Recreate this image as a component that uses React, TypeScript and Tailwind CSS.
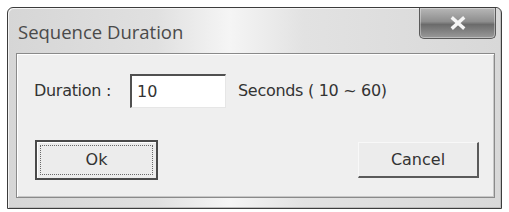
export default function App() {
  return (
    <div className="h-[212px] w-[509px] bg-white pl-[7px] pt-[7px]" style={{ fontFamily: "Tahoma, 'DejaVu Sans', sans-serif" }}>
      <div className="relative flex h-[202px] w-[495px] flex-col rounded-t-[6px] border border-[#3c3c3c] bg-[linear-gradient(90deg,#d6d6d6_0%,#e0e0e0_30%,#f5f5f5_45%,#e2e2e2_60%,#d8d8d8_100%)] shadow-[inset_1px_1px_0_#f4f4f4,inset_-1px_-1px_0_#bdbdbd]">
        <div className="flex h-[45px] items-start">
          <span className="pl-[10px] pt-[13px] font-['Open_Sans',sans-serif] text-[18.5px] leading-[22px] text-[#4a4a4a]">
            Sequence Duration
          </span>
          <button
            type="button"
            aria-label="Close"
            className="ml-auto mr-[5px] flex h-[31px] w-[77px] items-center justify-center rounded-b-[5px] border border-t-0 border-[#5a5a5a] bg-[linear-gradient(180deg,#b7b7b7_0%,#8e8e8e_45%,#6b6b6b_55%,#9a9a9a_100%)] shadow-[inset_0_0_0_1px_rgba(255,255,255,0.35)]"
          >
            <svg width="18" height="14" viewBox="0 0 18 14" aria-hidden="true">
              <path d="M4 2.5 L14 11.5 M14 2.5 L4 11.5" stroke="#f5f5f5" strokeWidth="3.4" strokeLinecap="square" />
            </svg>
          </button>
        </div>

        <div className="mb-[10px] ml-[8px] mr-[6px] flex h-[145px] flex-col border border-[#8a8a8a] bg-[#efefef] shadow-[inset_1px_1px_0_#ffffff,inset_-1px_-1px_0_#c8c8c8]">
          <div className="mt-[20px] flex items-center pl-[17px]">
            <span className="w-[96px] text-[16px] tracking-[-0.3px] text-[#333]">Duration :</span>
            <div className="flex h-[34px] w-[96px] items-center border-l-2 border-t-2 border-r border-b border-l-[#505050] border-t-[#505050] border-r-[#e6e6e6] border-b-[#e6e6e6] bg-white pl-[5px] text-[16px] text-[#333]">
              10
            </div>
            <span className="ml-[12px] text-[16px] tracking-[-0.3px] text-[#333]">Seconds ( 10 ~ 60)</span>
          </div>

          <div className="mt-[32px] flex items-center justify-between pl-[18px] pr-[15px]">
            <button
              type="button"
              className="flex h-[40px] w-[123px] items-center justify-center border-2 border-[#4a4a4a] bg-[#ececec] p-[3px] shadow-[inset_1px_1px_0_#ffffff]"
            >
              <span className="flex h-full w-full items-center justify-center border border-dotted border-[#6a6a6a] text-[16px] text-[#333]">
                Ok
              </span>
            </button>
            <button
              type="button"
              className="h-[36px] w-[121px] border border-t-[#f8f8f8] border-l-[#f8f8f8] border-r-2 border-b-2 border-r-[#5a5a5a] border-b-[#5a5a5a] bg-[#ececec] text-[16px] text-[#333]"
            >
              Cancel
            </button>
          </div>
        </div>
      </div>
    </div>
  );
}
